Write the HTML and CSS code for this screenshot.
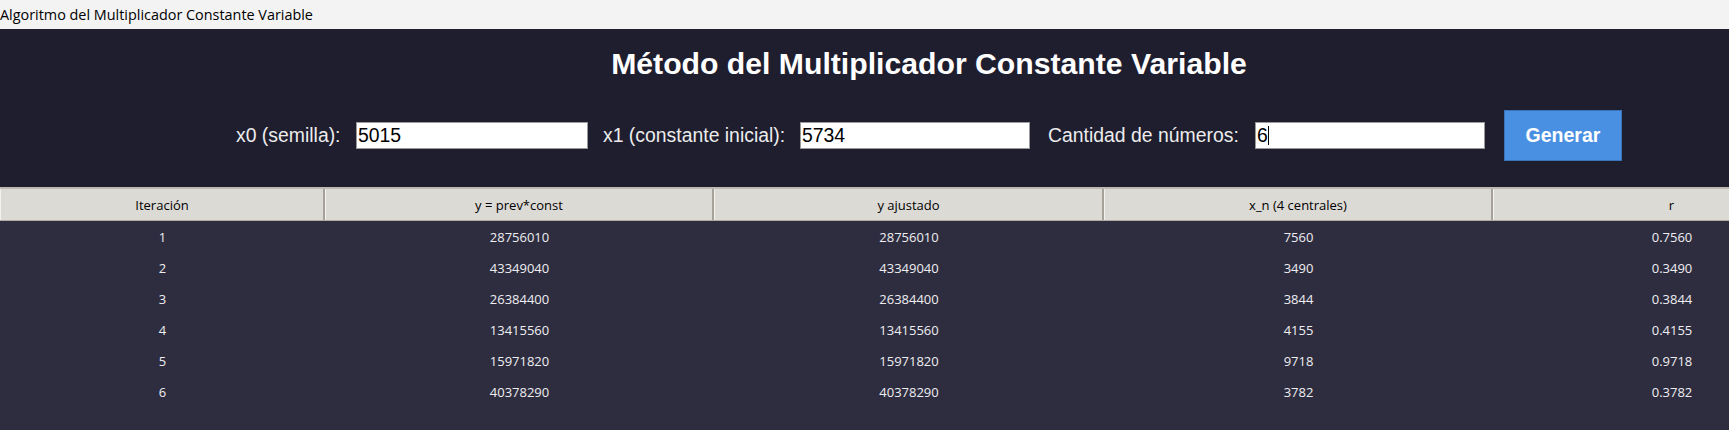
FILE: index.html
```html
<!DOCTYPE html>
<html lang="es">
<head>
<meta charset="utf-8">
<title>Algoritmo del Multiplicador Constante Variable</title>
<link rel="stylesheet" href="styles.css">
</head>
<body>
<div class="titlebar">Algoritmo del Multiplicador Constante Variable</div>
<div class="header">
  <div class="header-inner">
    <h1 class="title">Método del Multiplicador Constante Variable</h1>
    <div class="form">
      <span class="label l1">x0 (semilla):</span>
      <div class="entry e1"><span>5015</span></div>
      <span class="label l2">x1 (constante inicial):</span>
      <div class="entry e2"><span>5734</span></div>
      <span class="label l3">Cantidad de números:</span>
      <div class="entry e3"><span>6</span><span class="caret"></span></div>
      <button class="btn">Generar</button>
    </div>
  </div>
</div>
<div class="table">
  <div class="grid">
    <div class="row head">
      <div class="th">Iteración</div>
      <div class="th">y = prev*const</div>
      <div class="th">y ajustado</div>
      <div class="th">x_n (4 centrales)</div>
      <div class="th">r</div>
    </div>
    <div class="row"><div>1</div><div>28756010</div><div>28756010</div><div>7560</div><div>0.7560</div></div>
    <div class="row"><div>2</div><div>43349040</div><div>43349040</div><div>3490</div><div>0.3490</div></div>
    <div class="row"><div>3</div><div>26384400</div><div>26384400</div><div>3844</div><div>0.3844</div></div>
    <div class="row"><div>4</div><div>13415560</div><div>13415560</div><div>4155</div><div>0.4155</div></div>
    <div class="row"><div>5</div><div>15971820</div><div>15971820</div><div>9718</div><div>0.9718</div></div>
    <div class="row"><div>6</div><div>40378290</div><div>40378290</div><div>3782</div><div>0.3782</div></div>
  </div>
</div>
</body>
</html>
```
FILE: styles.css
```css
html, body {
  margin: 0;
  padding: 0;
  height: 100%;
  overflow: hidden;
}
body {
  background: #2e2d3f;
  font-family: "Open Sans", "Noto Sans", sans-serif;
}
.titlebar {
  height: 29px;
  line-height: 29px;
  background: #f3f3f3;
  color: #000;
  font-family: "Open Sans", sans-serif;
  font-size: 14.4px;
  white-space: nowrap;
}
.header {
  background: #1f1e2f;
  height: 158px;
  box-sizing: border-box;
  padding-top: 21px;
}
.header-inner {
  width: 1386px;
  margin-left: 236px;
}
.title {
  margin: 0;
  height: 28px;
  line-height: 28px;
  text-align: center;
  color: #ffffff;
  font-family: "Liberation Sans", Arial, sans-serif;
  font-weight: bold;
  font-size: 30.2px;
}
.form {
  margin-top: 32px;
  display: flex;
  align-items: center;
  height: 51px;
}
.label {
  color: #ececec;
  font-family: "Liberation Sans", Arial, sans-serif;
  font-size: 19.4px;
  white-space: nowrap;
}
.l1 { width: 105px; margin-right: 15px; }
.l2 { width: 182px; margin-right: 15px; }
.l3 { width: 194px; margin-right: 13px; }
.entry {
  box-sizing: border-box;
  height: 27px;
  background: #fff;
  border: 1px solid #9a9a9a;
  color: #000;
  font-family: "Liberation Sans", Arial, sans-serif;
  font-size: 19.4px;
  line-height: 25px;
  padding-left: 1px;
  display: flex;
  align-items: center;
}
.e1 { width: 232px; margin-right: 15px; }
.e2 { width: 230px; margin-right: 18px; }
.e3 { width: 230px; margin-right: 19px; }
.caret {
  display: inline-block;
  width: 1px;
  height: 19px;
  background: #000;
}
.btn {
  box-sizing: border-box;
  width: 118px;
  height: 51px;
  background: #4a90e2;
  border: 1px solid #3a73b8;
  color: #fff;
  font-family: "Liberation Sans", Arial, sans-serif;
  font-weight: bold;
  font-size: 19.5px;
  padding: 0;
}
.table {
  width: 100%;
  overflow: hidden;
  border-top: 2px solid #bdb9b1;
}
.grid {
  width: 1851px;
}
.row {
  display: grid;
  grid-template-columns: 325px 389px 390px 389px 358px;
  height: 31px;
  color: #eeeef2;
  font-size: 13px;
  font-family: "Open Sans", "Noto Sans", sans-serif;
}
.row > div {
  display: flex;
  align-items: center;
  justify-content: center;
}
.row.head {
  height: 31px;
  background: #dcdad5;
  color: #000;
  border-bottom: 1px solid #b0aca4;
}
.th {
  box-sizing: border-box;
  border-right: 2px solid #a6a29a;
  border-left: 1px solid #f2f1ee;
}
```
